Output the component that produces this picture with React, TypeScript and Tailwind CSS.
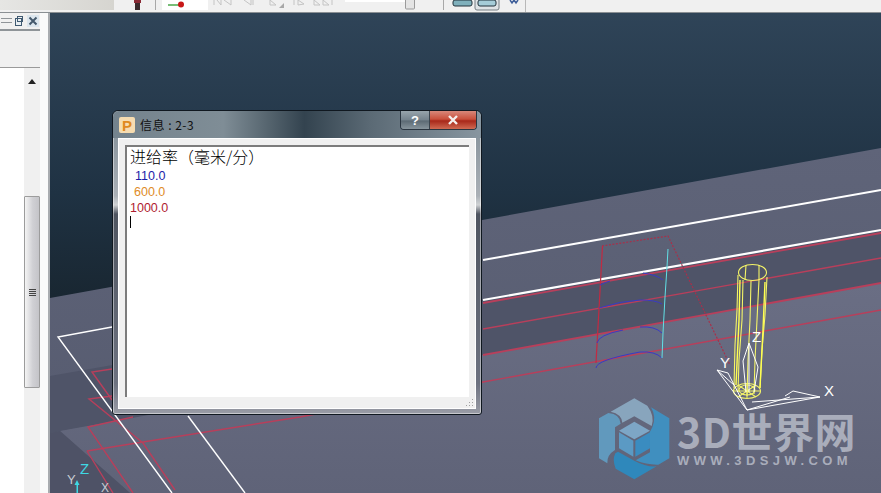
const cjk = "font-['Noto_Sans_CJK_SC','Noto_Sans',sans-serif]";

const ToolbarStrip = () => (
  <div className="flex h-[13px] shrink-0 overflow-hidden border-b border-[#8a8f93] bg-[#f0f0f0]">
    <div className="h-[10px] w-[114px] bg-[linear-gradient(90deg,#e6e6e4,#d6d5d0)]" />
    <svg width="767" height="12" viewBox="114 0 767 12" className="shrink-0">
      {/* person */}
      <rect x="135" y="2" width="5" height="8" fill="#3a2a2c" />
      <rect x="134" y="0" width="7" height="3" fill="#8a2a35" />
      {/* separator */}
      <line x1="155.5" y1="0" x2="155.5" y2="10" stroke="#a8a8a8" />
      {/* axis box */}
      <rect x="162" y="0" width="46" height="10" fill="#ffffff" />
      <line x1="168" y1="5" x2="181" y2="5" stroke="#4aa84a" strokeWidth="1.5" />
      <circle cx="181" cy="4.5" r="3" fill="#c81818" />
      {/* disabled media buttons */}
      <g fill="none" stroke="#c4c4c4">
        <path d="M214 0v5M217 0l4 5M221 0v5M224 0l7 5V0" />
        <path d="M244 0l7 5V0M253 0v5" />
        <path d="M270 0l6 5-6 0z" />
        <path d="M294 0v5M298 0l6 4-6 1z" />
        <path d="M314 0l6 5-6 0zM323 0l6 5-6 0zM332 0v5" />
      </g>
      <path d="M279 8l5-5v5z" fill="#a8a8a8" />
      {/* slider */}
      <rect x="345" y="0" width="62" height="2" fill="#ffffff" />
      <rect x="405.5" y="-3" width="9" height="12" rx="1" fill="#e4e4e4" stroke="#9a9a9a" />
      <line x1="443.5" y1="0" x2="443.5" y2="10" stroke="#a8a8a8" />
      {/* view buttons */}
      <rect x="475" y="-3" width="24" height="13" rx="2" fill="#dfe3e6" stroke="#777f84" />
      <rect x="453" y="0" width="19" height="6" rx="2" fill="#7fb0bc" stroke="#22333c" />
      <rect x="478" y="0" width="18" height="6" rx="2" fill="#a5ccd8" stroke="#22333c" />
      <path d="M510 0l2 3 2-3 2 3 2-3" fill="none" stroke="#3f5f9a" strokeWidth="1.5" />
      <line x1="525.5" y1="0" x2="525.5" y2="12" stroke="#b8b8b8" />
    </svg>
  </div>
);

const SidePanel = () => (
  <div className="flex w-[50px] shrink-0 border-r-2 border-[#a9acb0] bg-[#fafafa]">
    <div className="flex w-[40px] shrink-0 flex-col bg-[#f0f0f0]">
      <div className="flex h-[18px] shrink-0 items-center justify-end gap-[4px] border-b-2 border-[#8f9498] pr-[1px]">
        <svg width="22" height="12" viewBox="0 0 22 12">
          <path d="M0 3.5h11M0 7.5h11" stroke="#8f9498" />
          <rect x="14.5" y="3.5" width="6" height="7" fill="#e8eef2" stroke="#3f5a72" />
          <rect x="16.5" y="1.5" width="5" height="5" fill="none" stroke="#3f5a72" />
        </svg>
        <svg width="12" height="12" viewBox="0 0 12 12">
          <rect width="12" height="12" fill="#dce6ee" />
          <path d="M2.5 2.5l7 7M9.5 2.5l-7 7" stroke="#44586c" strokeWidth="2" />
        </svg>
      </div>
      <div className="h-[37px] shrink-0 border-b border-[#9a9a9a]" />
      <div className="flex flex-1">
        <div className="w-[24px] bg-white" />
        <div className="flex w-[16px] flex-col items-center">
          <svg width="10" height="6" viewBox="0 0 10 6" className="mt-[11px]">
            <path d="M5 0l4 5H1z" fill="#222222" />
          </svg>
          <div className="mt-[111px] flex h-[192px] w-[16px] items-center justify-center rounded-[1px] border border-[#9c9c9c] bg-[linear-gradient(90deg,#f4f4f4,#d0d0d4_55%,#c4c4c8)]">
            <div className="flex flex-col gap-[1px]">
              <div className="h-[1px] w-[7px] bg-[#444444]" />
              <div className="h-[1px] w-[7px] bg-[#444444]" />
              <div className="h-[1px] w-[7px] bg-[#444444]" />
              <div className="h-[1px] w-[7px] bg-[#444444]" />
            </div>
          </div>
        </div>
      </div>
    </div>
  </div>
);

const Scene = () => (
  <svg className="absolute inset-0 h-full w-full" viewBox="50 13 831 480">
    <defs>
      <linearGradient id="sky" x1="0" y1="0" x2="0" y2="1">
        <stop offset="0" stopColor="#2f4458" />
        <stop offset="0.6" stopColor="#1f3243" />
        <stop offset="1" stopColor="#18252f" />
      </linearGradient>
      <linearGradient id="plate" x1="0" y1="0" x2="0" y2="1">
        <stop offset="0" stopColor="#5f6479" />
        <stop offset="1" stopColor="#555a6e" />
      </linearGradient>
      <linearGradient id="floor" x1="0" y1="0" x2="0" y2="1">
        <stop offset="0" stopColor="#6a6e84" />
        <stop offset="1" stopColor="#5f6378" />
      </linearGradient>
    </defs>
    <rect x="50" y="13" width="831" height="300" fill="url(#sky)" />
    <polygon points="50,298 881,148 881,493 50,493" fill="url(#plate)" />
    <polygon points="50,376 881,230 881,283 50,433" fill="#4f5468" />
    <polygon points="60,431 881,283 881,493 130,493" fill="url(#floor)" />
    <polygon points="50,433 60,431 130,493 50,493" fill="#4e5266" />

    {/* red edges */}
    <g fill="none" stroke="#b83f5b" strokeWidth="1.4">
      <line x1="483" y1="303" x2="881" y2="233" strokeWidth="1.8" />
      <line x1="483" y1="329" x2="881" y2="258" />
      <line x1="483" y1="355" x2="881" y2="283" strokeWidth="1.8" />
      <line x1="483" y1="382" x2="881" y2="310" />
      <path d="M112 369L92 372L112 400M112 396L89 399L143 443L175 490M133 417L88 427L133 493M87 451L143 442L300 417L483 382M87 451L113 493" />
    </g>

    {/* white edges */}
    <g fill="none" stroke="#ffffff">
      <line x1="483" y1="260" x2="881" y2="190" strokeWidth="2" />
      <line x1="483" y1="300" x2="881" y2="230" strokeWidth="2.2" />
      <path d="M112 327L58 337L172 493" strokeWidth="1.4" />
      <line x1="188" y1="416" x2="245" y2="493" strokeWidth="1.4" />
    </g>

    {/* toolpath */}
    <g fill="none">
      <path d="M602 246L668 236L730 365" stroke="#a8304a" strokeWidth="1.2" strokeDasharray="2 1.5" />
      <path d="M602.5 246L596 363" stroke="#c22a42" strokeWidth="1.2" />
      <path d="M600 285Q606 282 610 281M643 273Q657 275 663 280M599 308Q620 301 640 300Q656 300 662 304M597 343Q598 335 623 330M640 327Q655 326 662 333M596 368Q596 360 640 352Q655 351 662 358" stroke="#3a3ac4" />
      <path d="M668 249L667 267L665 297L663 333L662 358" stroke="#62e0e6" />
    </g>

    {/* tool */}
    <g fill="none" stroke="#f4f468" strokeWidth="1.1">
      <ellipse cx="752.5" cy="272.5" rx="14" ry="8" />
      <path d="M738 275L737 310L735 345L734 388M767 277L765 315L762 350L760 388M743 280L742 320L739 360L738 392M751 281L750 320L748 360L747 396M759 280L757 320L755 360L754 394M746 265L745 280M759 265L759 280" />
      <path d="M740 280L739 320L736 385M765 282L763 330L760 388" stroke="#ffff50" strokeWidth="1.4" />
      <ellipse cx="747" cy="391" rx="13.5" ry="7.5" />
      <ellipse cx="747" cy="390" rx="8" ry="5" />
      <path d="M733 391L761 391M738 385L756 397M756 385L738 397M747 383V398" />
    </g>

    {/* triad */}
    <g fill="none" stroke="#ffffff">
      <path d="M717 370L728 373L747 410M717 370L747 410L820 397L752 402M717 370L734 385" />
      <path d="M820 397L793 391L785 396M747 410L790 397" />
      <path d="M749 343L743 361L746 392M749 343L758 367L754 392M749 345V392" />
    </g>
    <g fill="#ffffff" fontSize="15" fontFamily="'Liberation Sans',sans-serif">
      <text x="720" y="368">Y</text>
      <text x="824" y="396">X</text>
      <text x="752" y="342">Z</text>
    </g>

    {/* small triad, bottom left */}
    <text x="80" y="474" fill="#3fd8e4" fontSize="15" fontFamily="'Liberation Sans',sans-serif">Z</text>
    <text x="67" y="484" fill="#c8ccd4" fontSize="13" fontFamily="'Liberation Sans',sans-serif">Y</text>
    <text x="101" y="492" fill="#c8ccd4" fontSize="12" fontFamily="'Liberation Sans',sans-serif">X</text>
    <path d="M77 480L74.5 485H76.5V493H78V485H79.5Z" fill="#3fd8e4" />

    {/* logo mark */}
    <g transform="translate(590 390) scale(0.3333)">
      <path d="M133 25L172 47Q195 78 185 108L133 79L97 98Q95 72 62 65Z" fill="#88a5bd" />
      <path d="M183 52L238 85V205L205 224Q170 225 137 211L180 187V125L187 112Q200 80 183 52Z" fill="#408fbf" />
      <path d="M200 229L133 268L77 236Q66 210 76 190L84 185L133 212Q170 232 200 229Z" fill="#2f88bb" />
      <path d="M27 85L55 69Q90 72 92 101L75 112V180Q50 195 52 220L27 205Z" fill="#6199bd" />
      <path d="M133 95L180 122L133 148L87 122Z" fill="#7da6c6" />
      <path d="M87 127L130 152V200L87 175Z" fill="#5b9ac4" />
      <path d="M136 152L180 127V175L136 200Z" fill="#3a8cc0" />
    </g>
  </svg>
);

const InfoDialog = () => (
  <div className="absolute left-[62px] top-[97px] flex h-[305px] w-[370px] flex-col rounded-t-[6px] rounded-b-[3px] border border-[#101820] bg-[linear-gradient(180deg,#7d8a94_0%,#aab0b6_28%,#d0d2d4_31%,#4f5560_34%,#6d7280_90%,#9a9ca6_100%)] shadow-[inset_0_0_0_1px_rgba(255,255,255,0.45)]">
    <div className="flex h-[27px] shrink-0 justify-between rounded-t-[6px] bg-[linear-gradient(90deg,#74838d_0%,#7f8d96_30%,#56656f_42%,#33434f_52%,#5b6a75_70%,#8896a0_100%)] pl-[6px] pr-[4px]">
      <div className="flex items-center gap-[5px] pt-[1px]">
        <div className="flex h-[16px] w-[16px] items-center justify-center rounded-[2px] bg-[#f6dcb0]">
          <span className="font-['Liberation_Sans',sans-serif] text-[15px] font-bold leading-none text-[#e08a20]">P</span>
        </div>
        <span className={`${cjk} text-[12px] leading-none tracking-[0.5px] text-[#101010]`}>信息 : 2-3</span>
      </div>
      <div className="flex h-[19px] overflow-hidden rounded-b-[4px] border border-t-0 border-[#2a3540]">
        <div className="flex w-[29px] items-center justify-center border-r border-[#39444e] bg-[linear-gradient(180deg,#97a4ac_0%,#74828c_50%,#5c6a74_55%,#87949c_100%)]">
          <span className="font-['Liberation_Sans',sans-serif] text-[13px] font-bold leading-none text-white">?</span>
        </div>
        <div className="flex w-[46px] items-center justify-center bg-[linear-gradient(180deg,#d8887a_0%,#c9503c_45%,#a8281a_55%,#d06a52_100%)]">
          <svg width="12" height="10" viewBox="0 0 12 10">
            <path d="M2 1l8 8M10 1l-8 8" stroke="#f4f0ee" strokeWidth="2.4" />
          </svg>
        </div>
      </div>
    </div>
    <div className="mx-[5px] mb-[5px] flex-1 bg-[#f0f0f0] pb-[12px] pl-[7px] pr-[7px] pt-[7px] shadow-[inset_0_0_0_1px_#ffffff]">
      <div className="relative h-full border-l-2 border-t-2 border-[#7c7c7c] border-b-[#dcdcdc] border-r-[#dcdcdc] bg-white pl-[3px]">
        <div className={`${cjk} h-[21px] text-[16px] font-light leading-[18px] text-black`}>进给率（毫米/分）</div>
        <div className="h-[16px] pl-[5px] font-['Liberation_Sans',sans-serif] text-[12.5px] leading-[16px] text-[#1c1ca8]">110.0</div>
        <div className="h-[16px] pl-[4px] font-['Liberation_Sans',sans-serif] text-[12.5px] leading-[16px] text-[#e08c28]">600.0</div>
        <div className="h-[16px] font-['Liberation_Sans',sans-serif] text-[12.5px] leading-[16px] text-[#b01c30]">1000.0</div>
        <div className="h-[12px] w-px bg-black" />
        <svg width="10" height="10" viewBox="0 0 10 10" className="absolute -bottom-[11px] -right-[5px]">
          <path d="M8 1h1v1H8zM5 4h1v1H5zM8 4h1v1H8zM2 7h1v1H2zM5 7h1v1H5zM8 7h1v1H8z" fill="#a0a0a0" />
        </svg>
      </div>
    </div>
  </div>
);

const App = () => {
  return (
    <div className="flex h-[493px] w-[881px] flex-col overflow-hidden bg-[#f0f0f0]">
      <ToolbarStrip />
      <div className="flex min-h-0 flex-1">
        <SidePanel />
        <div className="relative flex-1 overflow-hidden">
          <Scene />
          <InfoDialog />

          {/* watermark text */}
          <div className="absolute left-[627px] top-[400px] flex flex-col items-start">
            <span className={`${cjk} text-[41px] font-bold leading-[34px] tracking-[0.5px] text-[#a9adbb]`}>3D世界网</span>
            <span className="mt-[7px] font-['Liberation_Sans',sans-serif] text-[13px] font-bold leading-[14px] tracking-[4.4px] text-[#a9adbb]">WWW.3DSJW.COM</span>
          </div>
        </div>
      </div>
    </div>
  );
};

export default App;
